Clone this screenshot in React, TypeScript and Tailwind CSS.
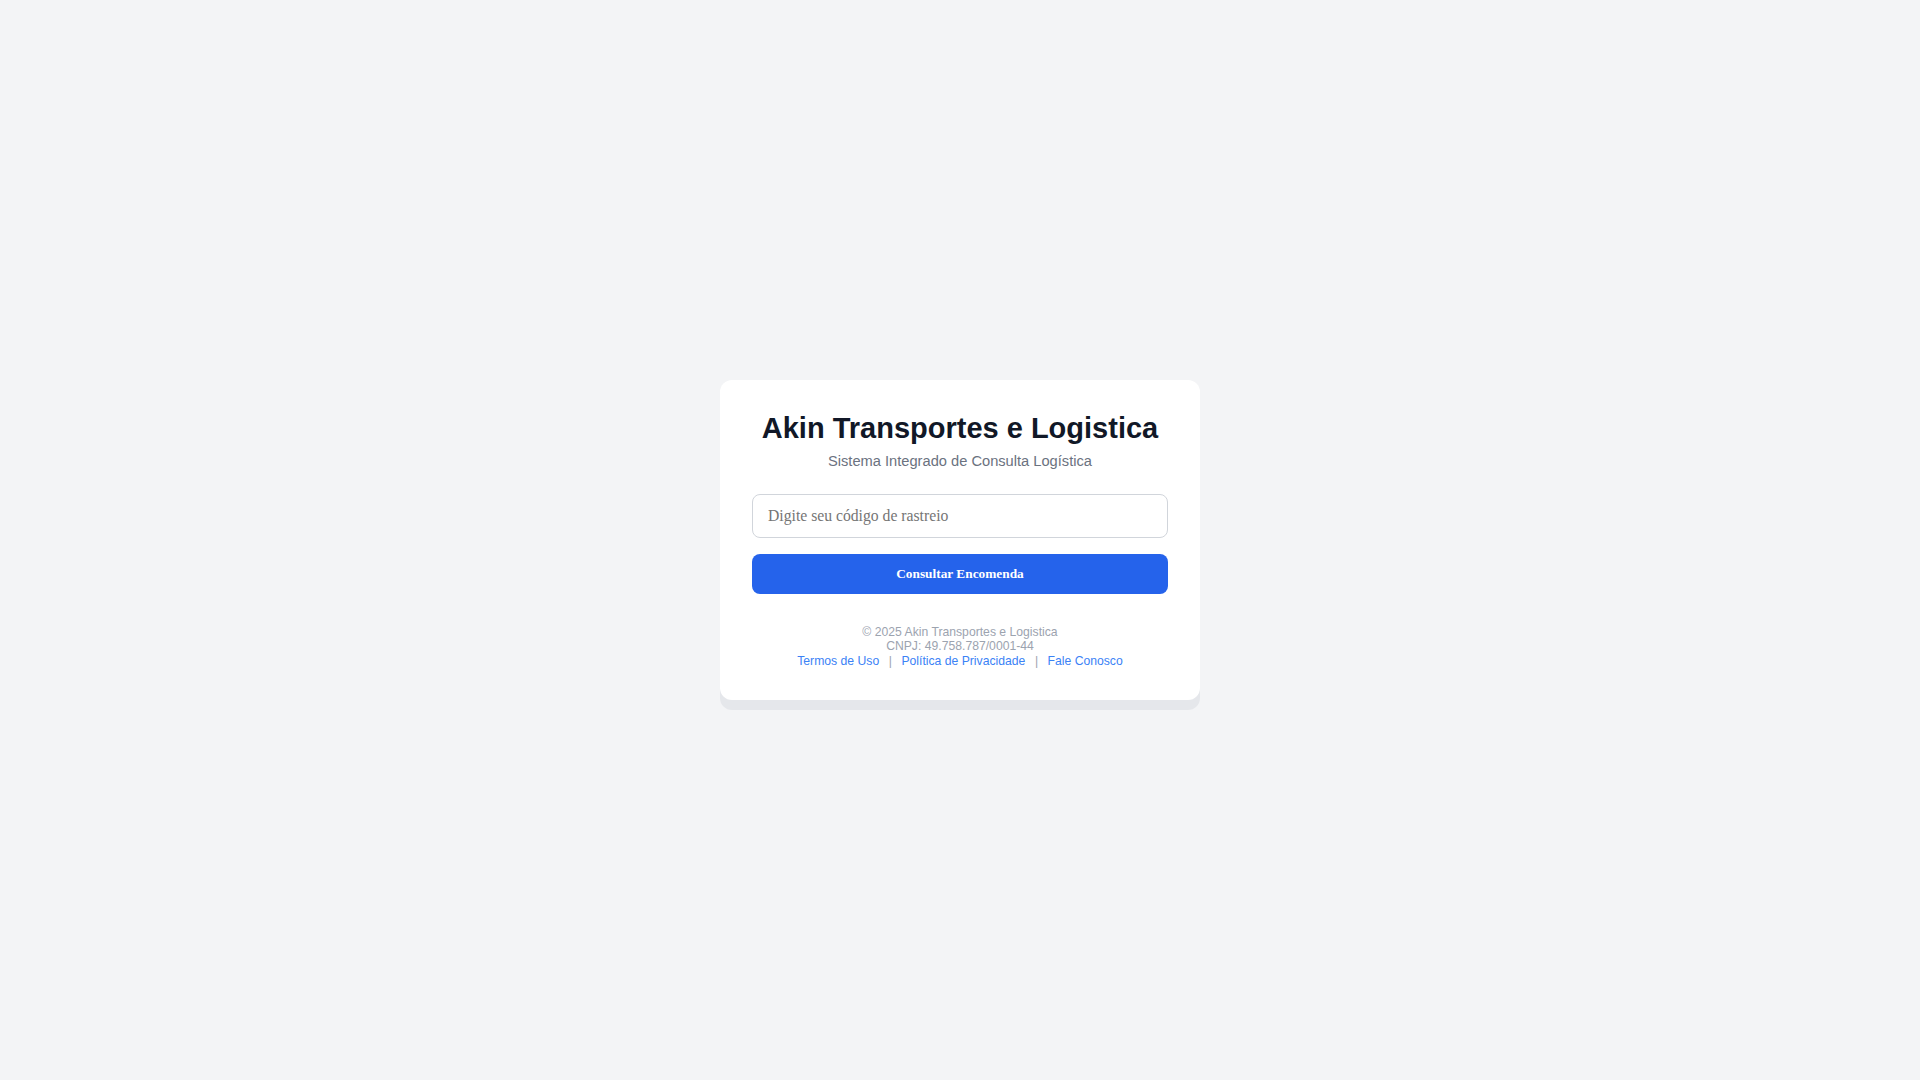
import React, { useState } from 'react';

const links = ['Termos de Uso', 'Política de Privacidade', 'Fale Conosco'];

export default function App() {
  const [code, setCode] = useState('');

  return (
    <div className="min-h-screen w-full bg-[#f3f4f6] flex items-center justify-center font-['Liberation_Sans',Arial,sans-serif]">
      <div className="w-[480px] bg-white rounded-xl shadow-[0_10px_0_#e5e7eb] px-8 pt-[31px] pb-8 text-center">
        <h1 className="text-[29px] leading-[34px] font-bold text-[#111827]">Akin Transportes e Logistica</h1>
        <p className="mt-[4px] text-[14.67px] leading-6 text-[#6b7280]">Sistema Integrado de Consulta Logística</p>

        <input
          type="text"
          value={code}
          onChange={e => setCode(e.target.value)}
          placeholder="Digite seu código de rastreio"
          className="mt-[21px] block w-full h-11 px-[15px] border border-[#d1d5db] rounded-lg bg-white text-[15.7px] text-[#111827] placeholder:text-[#757575] font-['Liberation_Serif','Times_New_Roman',serif] outline-none"
        />

        <button
          type="button"
          className="mt-4 block w-full h-10 rounded-lg bg-[#2563eb] text-white text-[13.3333px] font-bold font-['Liberation_Serif','Times_New_Roman',serif] cursor-pointer"
        >
          Consultar Encomenda
        </button>

        <div className="mt-[31px] text-[12.2px] leading-[14.5px] text-[#9ca3af]">
          <div>© 2025 Akin Transportes e Logistica</div>
          <div>CNPJ: 49.758.787/0001-44</div>
          <div>
            {links.map((l, i) => (
              <React.Fragment key={l}>
                {i > 0 && <span className="mx-[9.5px] text-[#9ca3af]">|</span>}
                <a href="#" className="text-[#3b82f6]">{l}</a>
              </React.Fragment>
            ))}
          </div>
        </div>
      </div>
    </div>
  );
}
